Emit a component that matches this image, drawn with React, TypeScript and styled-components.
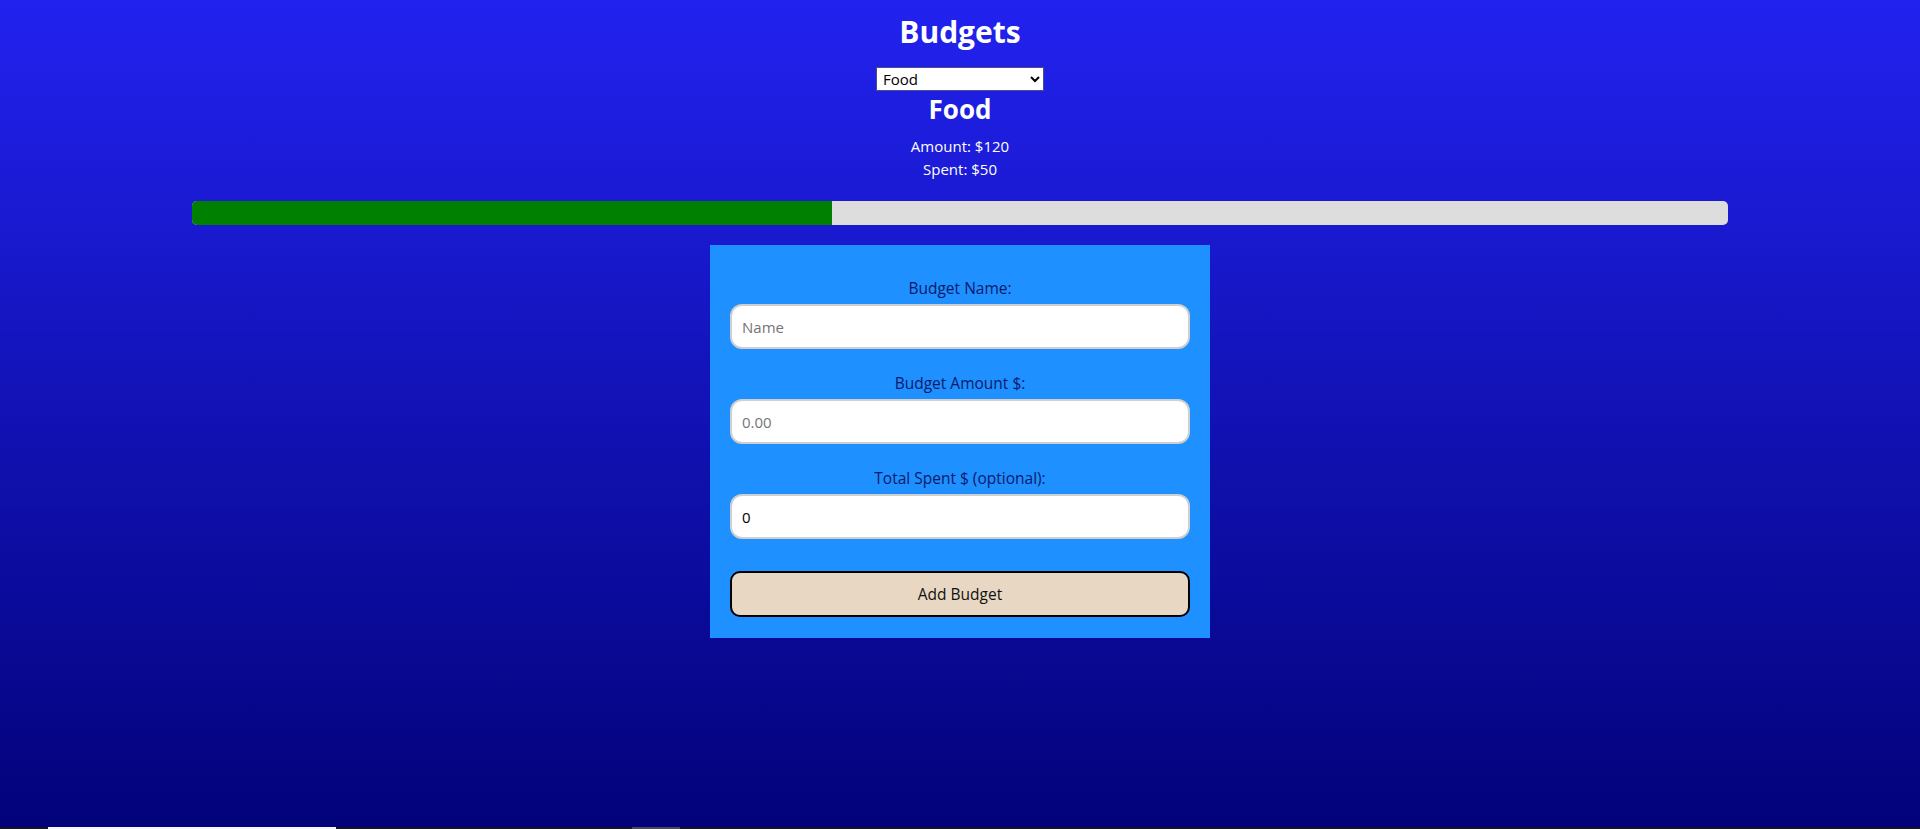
import React from "react";
import styled, { createGlobalStyle } from "styled-components";

const GlobalStyle = createGlobalStyle`
  html, body {
    margin: 0;
    padding: 0;
  }
  body {
    font-family: "Open Sans", "Noto Sans", sans-serif;
  }
  * {
    box-sizing: border-box;
  }
`;

const Page = styled.div`
  display: flex;
  flex-direction: column;
  align-items: center;
  height: 829px;
  padding-top: 12px;
  background: linear-gradient(to bottom, #2222f0, #02027a);
  color: #fff;
  text-align: center;
  overflow: hidden;
`;

const Title = styled.h1`
  margin: 0;
  font-size: 30px;
  line-height: 40px;
  font-weight: 700;
`;

const Picker = styled.select`
  width: 168px;
  height: 24px;
  margin-top: 15px;
  padding: 0 2px;
  font-family: inherit;
  font-size: 15px;
  color: #000;
  background: #fff;
  border: 1px solid #4a4a9a;
  border-radius: 0;
`;

const Name = styled.h2`
  margin: 4px 0 0;
  font-size: 26px;
  line-height: 28px;
  font-weight: 700;
`;

const Stats = styled.div`
  margin-top: 12px;
  font-size: 15px;
  line-height: 23px;
`;

const Track = styled.div`
  width: 80%;
  height: 24px;
  margin-top: 20px;
  background: #dddddd;
  border-radius: 5px;
  overflow: hidden;
`;

const Fill = styled.div`
  height: 100%;
  background: #008000;
`;

const Form = styled.form`
  display: flex;
  flex-direction: column;
  width: 500px;
  margin-top: 20px;
  padding: 32px 20px 21px;
  background: #1e90ff;
`;

const Field = styled.div<{ last?: boolean }>`
  display: flex;
  flex-direction: column;
  gap: 5px;
  margin-bottom: ${(p) => (p.last ? 32 : 23)}px;
`;

const Label = styled.label`
  font-size: 15.5px;
  line-height: 22px;
  color: #0b1a6b;
`;

const Input = styled.input`
  width: 100%;
  height: 45px;
  padding: 0 10px;
  font-family: inherit;
  font-size: 15px;
  color: #000;
  background: #fff;
  border: 2px solid #cfcfcf;
  border-radius: 12px;
  outline: none;

  &::placeholder {
    color: #757575;
  }
`;

const Submit = styled.button`
  height: 46px;
  font-family: inherit;
  font-size: 15.5px;
  color: #111;
  background: #e8d8c3;
  border: 2px solid #000;
  border-radius: 10px;
`;

const Spacer = styled.div`
  flex: 1;
`;

const Strip = styled.div`
  display: flex;
  align-self: stretch;
  height: 2px;
  background: #15151f;
`;

const StripPart = styled.div<{ w: number; tone: string }>`
  width: ${(p) => p.w}px;
  background: ${(p) => p.tone};
`;

const budgets = [
  { name: "Food", amount: 120, spent: 50 },
];

export default function App() {
  const [current, setCurrent] = React.useState(budgets[0].name);
  const budget = budgets.find((b) => b.name === current) ?? budgets[0];
  const pct = Math.min(100, (budget.spent / budget.amount) * 100);

  return (
    <>
      <GlobalStyle />
      <Page>
        <Title>Budgets</Title>
        <Picker value={current} onChange={(e) => setCurrent(e.target.value)}>
          {budgets.map((b) => (
            <option key={b.name} value={b.name}>
              {b.name}
            </option>
          ))}
        </Picker>
        <Name>{budget.name}</Name>
        <Stats>
          <div>Amount: ${budget.amount}</div>
          <div>Spent: ${budget.spent}</div>
        </Stats>
        <Track>
          <Fill style={{ width: `${pct}%` }} />
        </Track>
        <Form onSubmit={(e) => e.preventDefault()}>
          <Field>
            <Label htmlFor="bname">Budget Name:</Label>
            <Input id="bname" placeholder="Name" />
          </Field>
          <Field>
            <Label htmlFor="bamount">Budget Amount $:</Label>
            <Input id="bamount" placeholder="0.00" />
          </Field>
          <Field last>
            <Label htmlFor="bspent">Total Spent $ (optional):</Label>
            <Input id="bspent" defaultValue="0" />
          </Field>
          <Submit type="submit">Add Budget</Submit>
        </Form>
        <Spacer />
        <Strip>
          <StripPart w={48} tone="#15151f" />
          <StripPart w={288} tone="#f4f4fa" />
          <StripPart w={296} tone="#15151f" />
          <StripPart w={48} tone="#4a4a55" />
        </Strip>
      </Page>
    </>
  );
}
